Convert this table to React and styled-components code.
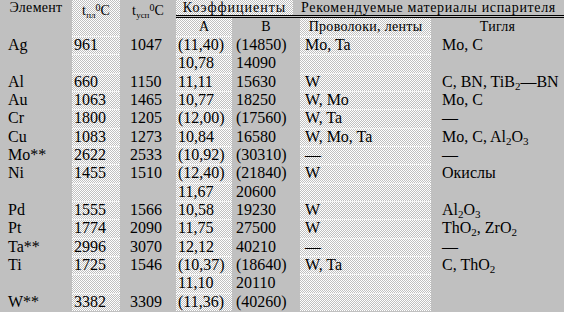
import React from 'react';
import styled, { createGlobalStyle, css } from 'styled-components';

const GREY = '#c0c0c0';
const SERIF = '"Liberation Serif", "Times New Roman", serif';

const GlobalStyle = createGlobalStyle`
  html, body {
    margin: 0;
    padding: 0;
    background: ${GREY};
  }
  body {
    font-family: ${SERIF};
    color: #000;
  }
`;

const dither = css`
  background-color: ${GREY};
  background-image: repeating-conic-gradient(#fff 0% 25%, ${GREY} 0% 50%);
  background-size: 2px 2px;
`;

const Table = styled.div`
  width: 564px;
  height: 312px;
  overflow: hidden;
  display: flex;
  flex-direction: column;
  font-family: ${SERIF};
`;

const Head = styled.div`
  display: flex;
  height: 36px;
`;

const HeadCell = styled.div`
  width: ${(p) => p.$w}px;
  height: 36px;
  box-sizing: border-box;
  text-align: center;
  font-size: 14px;
  line-height: 15px;
  letter-spacing: 0.3px;
  ${(p) => p.$dither && dither}
`;

const Small = styled.sub`
  font-size: 9px;
  vertical-align: -3px;
  letter-spacing: 0;
`;

const Sup = styled.sup`
  font-size: 10px;
  vertical-align: 4px;
  letter-spacing: 0;
`;

const Group = styled.div`
  flex: 1;
  display: flex;
  flex-direction: column;
`;

const GroupRow = styled.div`
  display: flex;
  height: 15px;
`;

const GroupTitle = styled.div`
  width: ${(p) => (p.$w ? `${p.$w}px` : 'auto')};
  flex: ${(p) => (p.$w ? 'none' : 1)};
  text-align: center;
  font-size: 14px;
  line-height: 15px;
  letter-spacing: ${(p) => p.$ls || 0}px;
  white-space: nowrap;
  ${(p) => p.$dither && dither}
`;

const DoubleRule = styled.div`
  height: 3px;
  box-sizing: border-box;
  border-top: 1px solid #000;
  border-bottom: 1px solid #000;
`;

const SubRow = styled.div`
  display: flex;
  height: 18px;
`;

const SubCell = styled.div`
  width: ${(p) => (p.$w ? `${p.$w}px` : 'auto')};
  flex: ${(p) => (p.$w ? 'none' : 1)};
  text-align: center;
  font-size: 14px;
  line-height: 18px;
  letter-spacing: ${(p) => p.$ls || 0}px;
  white-space: nowrap;
  ${(p) => p.$dither && dither}
`;

const Body = styled.div`
  display: grid;
  grid-template-columns: 72px 48px 56px 56px 68px 131px 1fr;
  grid-auto-rows: 18.33px;
`;

const Cell = styled.div`
  padding-left: ${(p) => p.$pad}px;
  font-size: 16px;
  line-height: 18px;
  white-space: nowrap;
  overflow: hidden;
  ${(p) =>
    p.$dither &&
    css`
      ${dither}
      box-shadow: inset 0 1px 0 #f4f4f4;
    `}
`;

const Sub = styled.sub`
  font-size: 11px;
  vertical-align: -3px;
  line-height: 0;
`;

const columns = [
  { pad: 8 },
  { pad: 2, dither: true },
  { pad: 10 },
  { pad: 2, dither: true },
  { pad: 4 },
  { pad: 5, dither: true },
  { pad: 11 },
];

// digits in formulas (TiB2, Al2O3) are subscripts
const chem = (s) =>
  s.split(/(\d)/).map((part, i) => (/\d/.test(part) ? <Sub key={i}>{part}</Sub> : part));

const rows = [
  ['Ag', '961', '1047', '(11,40)', '(14850)', 'Mo, Ta', 'Mo, C'],
  ['', '', '', '10,78', '14090', '', ''],
  ['Al', '660', '1150', '11,11', '15630', 'W', 'C, BN, TiB2—BN'],
  ['Au', '1063', '1465', '10,77', '18250', 'W, Mo', 'Mo, C'],
  ['Cr', '1800', '1205', '(12,00)', '(17560)', 'W, Ta', '—'],
  ['Cu', '1083', '1273', '10,84', '16580', 'W, Mo, Ta', 'Mo, C, Al2O3'],
  ['Mo**', '2622', '2533', '(10,92)', '(30310)', '—', '—'],
  ['Ni', '1455', '1510', '(12,40)', '(21840)', 'W', 'Окислы'],
  ['', '', '', '11,67', '20600', '', ''],
  ['Pd', '1555', '1566', '10,58', '19230', 'W', 'Al2O3'],
  ['Pt', '1774', '2090', '11,75', '27500', 'W', 'ThO2, ZrO2'],
  ['Ta**', '2996', '3070', '12,12', '40210', '—', '—'],
  ['Ti', '1725', '1546', '(10,37)', '(18640)', 'W, Ta', 'C, ThO2'],
  ['', '', '', '11,10', '20110', '', ''],
  ['W**', '3382', '3309', '(11,36)', '(40260)', '', ''],
];

export default function App() {
  return (
    <>
      <GlobalStyle />
      <Table>
        <Head>
          <HeadCell $w={72}>Элемент</HeadCell>
          <HeadCell $w={48} $dither>
            t<Small>пл</Small>
            <Sup>0</Sup>C
          </HeadCell>
          <HeadCell $w={56}>
            t<Small>усп</Small>
            <Sup>0</Sup>C
          </HeadCell>
          <Group>
            <GroupRow>
              <GroupTitle $w={117} $dither $ls={1}>
                Коэффициенты
              </GroupTitle>
              <GroupTitle $ls={0.65}>Рекомендуемые материалы испарителя</GroupTitle>
            </GroupRow>
            <DoubleRule />
            <SubRow>
              <SubCell $w={56} $dither>A</SubCell>
              <SubCell $w={68}>B</SubCell>
              <SubCell $w={131} $dither $ls={0.3}>
                Проволоки, ленты
              </SubCell>
              <SubCell $ls={0.3}>Тигля</SubCell>
            </SubRow>
          </Group>
        </Head>
        <Body>
          {rows.map((row, r) =>
            row.map((value, c) => (
              <Cell key={`${r}-${c}`} $pad={columns[c].pad} $dither={columns[c].dither}>
                {c === 6 ? chem(value) : value}
              </Cell>
            ))
          )}
        </Body>
      </Table>
    </>
  );
}
